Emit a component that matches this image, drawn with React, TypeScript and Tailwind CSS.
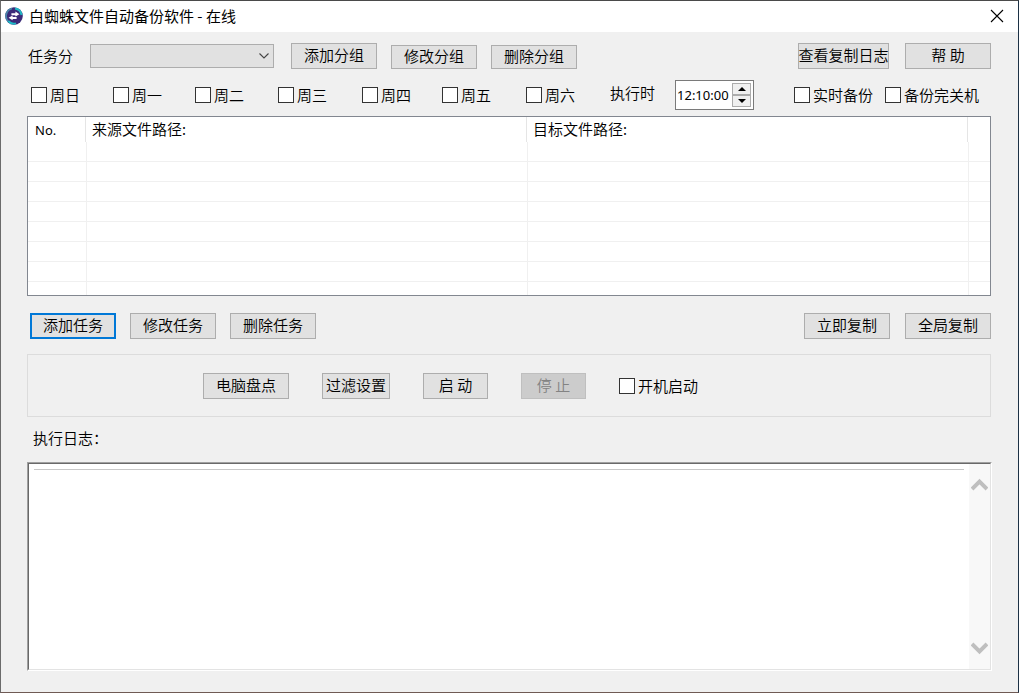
import { useState } from 'react';
import type { ButtonHTMLAttributes } from 'react';
import clsx from 'clsx';

const weekdays = [
  { name: '周日', width: 'w-[82px]' },
  { name: '周一', width: 'w-[82px]' },
  { name: '周二', width: 'w-[83px]' },
  { name: '周三', width: 'w-[84px]' },
  { name: '周四', width: 'w-[80px]' },
  { name: '周五', width: 'w-[84px]' },
  { name: '周六', width: 'w-[84px]' },
];

const emptyRows = [1, 2, 3, 4, 5, 6, 7];

const Button = ({ className, ...props }: ButtonHTMLAttributes<HTMLButtonElement>) => (
  <button
    type="button"
    className={clsx(
      'flex shrink-0 items-center justify-center whitespace-nowrap pb-[2px] leading-5 text-black',
      'disabled:border-[#bfbfbf] disabled:bg-[#cccccc] disabled:text-[#838383]',
      className,
    )}
    {...props}
  />
);

const plain = 'border border-[#adadad] bg-[#e1e1e1] hover:border-[#0078d7]';

const CheckBox = ({ label, className }: { label: string; className?: string }) => (
  <label className={clsx('flex shrink-0 items-center gap-[3px] whitespace-nowrap leading-5', className)}>
    <input
      type="checkbox"
      className="size-4 shrink-0 appearance-none border border-[#333333] bg-white checked:bg-[#0078d7]"
    />
    {label}
  </label>
);

const Logo = () => (
  <svg viewBox="0 0 18 18" className="size-[18px]" aria-hidden="true">
    <circle cx="9" cy="9" r="8.8" fill="#3b2a78" />
    <path d="M7 1.5A7.8 7.8 0 0 0 3 14.2" fill="none" stroke="#4a86a8" strokeWidth="1.8" />
    <path d="M10 1.4a7.7 7.7 0 0 1 6.5 6.6" fill="none" stroke="#1fb9c6" strokeWidth="2" />
    <path d="M3.2 14A7.7 7.7 0 0 0 11 16.4" fill="none" stroke="#1fb9c6" strokeWidth="2" />
    <path d="M10.4 4.6L14.4 7.2l-4 2.2V8.2H6.4V6.2h4z" fill="#fff" />
    <path d="M7.6 8.4L3.6 10.8l4 2.4V12h4v-2h-4z" fill="#fff" />
  </svg>
);

const TitleBar = () => (
  <header className="flex h-[31px] items-center justify-between bg-white pb-[2px] pl-1 pr-[14px]">
    <div className="flex items-center gap-[6px]">
      <Logo />
      <h1 className="font-normal leading-5">白蜘蛛文件自动备份软件 - 在线</h1>
    </div>
    <button type="button" aria-label="关闭" className="flex size-[14px] items-center justify-center">
      <svg viewBox="0 0 14 14" className="size-[14px]" fill="none" stroke="#000" strokeWidth="1.1">
        <path d="M1 1l12 12M13 1L1 13" />
      </svg>
    </button>
  </header>
);

const GroupBar = () => (
  <div className="flex h-[26px] justify-between">
    <div className="flex items-center">
      <label htmlFor="group" className="mr-[17px] pl-px whitespace-nowrap leading-5">
        任务分
      </label>
      <div className="relative mr-[17px]">
        <select
          id="group"
          className="block h-6 w-[184px] appearance-none rounded-none border border-[#adadad] bg-[#e1e1e1] px-1"
        />
        <svg
          viewBox="0 0 10 6"
          className="pointer-events-none absolute right-[5px] top-[9px] h-[6px] w-[10px]"
          fill="none"
          stroke="#444"
          strokeWidth="1.1"
        >
          <path d="M.5 .5L5 5L9.5 .5" />
        </svg>
      </div>
      <div className="flex items-end gap-[14px]">
        <Button className={clsx(plain, 'h-[26px] w-[86px]')}>添加分组</Button>
        <Button className={clsx(plain, 'h-6 w-[86px]')}>修改分组</Button>
        <Button className={clsx(plain, 'h-6 w-[86px]')}>删除分组</Button>
      </div>
    </div>
    <div className="flex gap-4">
      <Button className={clsx(plain, 'w-[91px]')}>查看复制日志</Button>
      <Button className={clsx(plain, 'w-[86px]')}>帮 助</Button>
    </div>
  </div>
);

const TimeField = () => {
  const [time, setTime] = useState('12:10:00');

  const step = (delta: number) => {
    const [h, m, s] = time.split(':');
    const hour = (Number(h) + delta + 24) % 24;
    setTime(`${String(hour).padStart(2, '0')}:${m}:${s}`);
  };

  const spin = 'flex h-3 w-[19px] items-center justify-center border border-[#acacac] bg-[#f0f0f0]';

  return (
    <div className="flex h-[30px] w-[79px] items-center border border-[#7a7a7a] bg-white pr-[2px]">
      <input
        id="time"
        value={time}
        onChange={(e) => setTime(e.target.value)}
        className="min-w-0 flex-1 pl-px font-['Noto_Sans'] text-[13px] font-normal leading-5 outline-none"
      />
      <div className="flex flex-col">
        <button type="button" aria-label="增加" className={spin} onClick={() => step(1)}>
          <svg viewBox="0 0 8 4" className="h-1 w-2">
            <path d="M0 4L4 0L8 4z" />
          </svg>
        </button>
        <button type="button" aria-label="减少" className={spin} onClick={() => step(-1)}>
          <svg viewBox="0 0 8 4" className="h-1 w-2">
            <path d="M0 0L4 4L8 0z" />
          </svg>
        </button>
      </div>
    </div>
  );
};

const ScheduleBar = () => (
  <div className="mt-[11px] flex h-[30px] items-center justify-between">
    <div className="flex items-center pl-1">
      {weekdays.map((day) => (
        <CheckBox key={day.name} label={day.name} className={day.width} />
      ))}
      <label htmlFor="time" className="mb-1 mr-5 whitespace-nowrap leading-5">
        执行时
      </label>
      <TimeField />
    </div>
    <div className="flex items-center gap-3 pr-3">
      <CheckBox label="实时备份" />
      <CheckBox label="备份完关机" />
    </div>
  </div>
);

const TaskTable = () => (
  <div className="mt-[6px] border border-[#828790] bg-white">
    <table className="w-full table-fixed border-separate border-spacing-0 text-left">
      <thead>
        <tr className="h-[25px] leading-5">
          <th className="w-[58px] border-r border-[#e5e5e5] p-0 pl-[7px] font-['Noto_Sans'] text-[13px] font-normal">
            No.
          </th>
          <th className="border-r border-[#e5e5e5] p-0 pb-[2px] pl-[6px] font-[350]">来源文件路径:</th>
          <th className="border-r border-[#e5e5e5] p-0 pb-[2px] pl-[6px] font-[350]">目标文件路径:</th>
          <th className="w-[22px] p-0" />
        </tr>
      </thead>
      <tbody>
        {emptyRows.map((row) => (
          <tr key={row} className="h-5">
            <td className="border-b border-[#f0f0f0] p-0" />
            <td className="border-b border-l border-[#f0f0f0] p-0" />
            <td className="border-b border-l border-[#f0f0f0] p-0" />
            <td className="border-b border-l border-[#f0f0f0] p-0" />
          </tr>
        ))}
        <tr className="h-[13px]">
          <td className="p-0" />
          <td className="border-l border-[#f0f0f0] p-0" />
          <td className="border-l border-[#f0f0f0] p-0" />
          <td className="border-l border-[#f0f0f0] p-0" />
        </tr>
      </tbody>
    </table>
  </div>
);

const TaskBar = () => (
  <div className="mt-[17px] flex h-[26px] justify-between">
    <div className="flex gap-[14px] pl-[3px]">
      <Button className="w-[86px] border-2 border-[#0078d7] bg-[#e1e1e1]">添加任务</Button>
      <Button className={clsx(plain, 'w-[86px]')}>修改任务</Button>
      <Button className={clsx(plain, 'w-[86px]')}>删除任务</Button>
    </div>
    <div className="flex gap-[15px]">
      <Button className={clsx(plain, 'w-[86px]')}>立即复制</Button>
      <Button className={clsx(plain, 'w-[86px]')}>全局复制</Button>
    </div>
  </div>
);

const ControlPanel = () => (
  <section className="mt-[15px] flex h-[63px] items-center gap-[33px] border border-[#dcdcdc] pl-[175px]">
    <Button className={clsx(plain, 'h-[26px] w-[86px]')}>电脑盘点</Button>
    <Button className={clsx(plain, 'h-[26px] w-[68px]')}>过滤设置</Button>
    <Button className={clsx(plain, 'h-[26px] w-[65px]')}>启 动</Button>
    <Button disabled className="h-[26px] w-[65px] border">
      停 止
    </Button>
    <CheckBox label="开机启动" />
  </section>
);

const ExecutionLog = () => (
  <section className="mt-[10px] -mr-px flex flex-1 flex-col">
    <h2 id="log-title" className="pl-[6px] font-[350] leading-[22px]">
      执行日志：
    </h2>
    <div className="mt-[13px] flex min-h-40 flex-1 border border-b-white border-l-[#a0a0a0] border-r-white border-t-[#a0a0a0]">
      <div className="flex flex-1 border border-b-[#e3e3e3] border-l-[#696969] border-r-[#e3e3e3] border-t-[#696969] bg-white">
        <div role="log" aria-labelledby="log-title" className="flex-1 px-[5px] pt-[5px]">
          <hr className="border-[#c8c8c8]" />
        </div>
        <div className="flex w-[21px] flex-col justify-between bg-[#f8f8f8] py-[14px]">
          <button type="button" aria-label="向上滚动" className="flex justify-center">
            <svg viewBox="0 0 17 13" className="h-[13px] w-[17px]" fill="none" stroke="#bfbfbf" strokeWidth="4">
              <path d="M1 11L8.5 3.5L16 11" />
            </svg>
          </button>
          <button type="button" aria-label="向下滚动" className="flex justify-center">
            <svg viewBox="0 0 17 13" className="h-[13px] w-[17px]" fill="none" stroke="#bfbfbf" strokeWidth="4">
              <path d="M1 2L8.5 9.5L16 2" />
            </svg>
          </button>
        </div>
      </div>
    </div>
  </section>
);

const App = () => {
  return (
    <div className="flex min-h-screen flex-col border border-b-[#6f5a54] border-l-[#6b6b6b] border-r-[#1c3145] border-t-[#4a4a4a] bg-[#f0f0f0] font-['Noto_Sans_CJK_SC',sans-serif] text-[15px] font-[350] text-black">
      <TitleBar />
      <main className="flex flex-1 flex-col pb-[21px] pl-[26px] pr-[27px] pt-[11px]">
        <GroupBar />
        <ScheduleBar />
        <TaskTable />
        <TaskBar />
        <ControlPanel />
        <ExecutionLog />
      </main>
    </div>
  );
};

export default App;
